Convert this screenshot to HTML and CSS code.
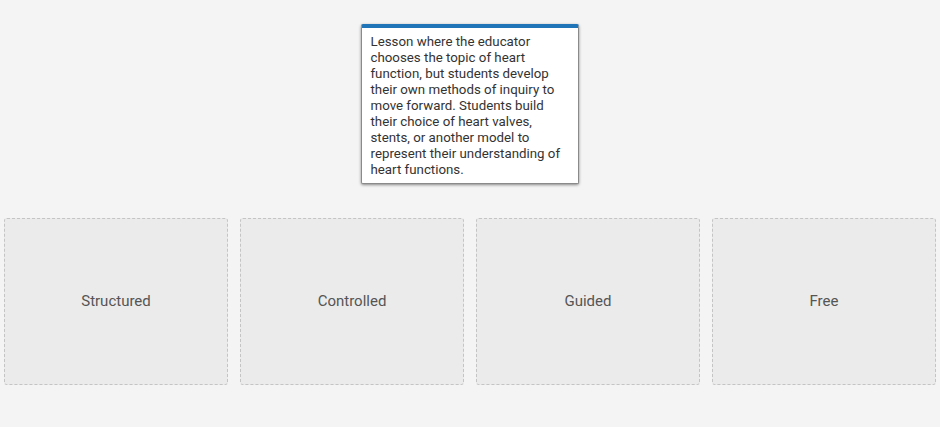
FILE: index.html
```html
<!DOCTYPE html>
<html>
<head>
<meta charset="utf-8">
<link rel="stylesheet" href="styles.css">
</head>
<body>
<div class="page">
  <div class="card-row">
    <div class="card">
      <p class="card-text">Lesson where the educator chooses the topic of heart function, but students develop their own methods of inquiry to move forward. Students build their choice of heart valves, stents, or another model to represent their understanding of heart functions.</p>
    </div>
  </div>
  <div class="zones">
    <div class="zone">Structured</div>
    <div class="zone">Controlled</div>
    <div class="zone">Guided</div>
    <div class="zone">Free</div>
  </div>
</div>
</body>
</html>
```
FILE: styles.css
```css
html, body {
  margin: 0;
  padding: 0;
  background: #f4f4f4;
  font-family: Roboto, "Liberation Sans", sans-serif;
}
.page {
  width: 940px;
  height: 427px;
  padding-top: 24px;
  box-sizing: border-box;
}
.card-row {
  display: flex;
  justify-content: center;
  padding-right: 1px;
}
.card {
  width: 218px;
  box-sizing: border-box;
  background: #fff;
  border: 1px solid #8a8a8a;
  border-top: 4px solid #1f75b8;
  border-radius: 2px;
  box-shadow: 0 1px 3px rgba(0,0,0,0.45);
  padding: 6px 10px 5px 9px;
}
.card-text {
  margin: 0;
  font-size: 13.3px;
  line-height: 16px;
  color: #333;
}
.zones {
  display: flex;
  gap: 12px;
  padding: 0 4px;
  margin-top: 34px;
}
.zone {
  flex: 1;
  height: 167px;
  box-sizing: border-box;
  background: #ebebeb;
  border: 1px dashed #c4c4c4;
  border-radius: 3px;
  display: flex;
  align-items: center;
  justify-content: center;
  font-size: 15px;
  color: #555;
  padding-bottom: 2px;
}
```
